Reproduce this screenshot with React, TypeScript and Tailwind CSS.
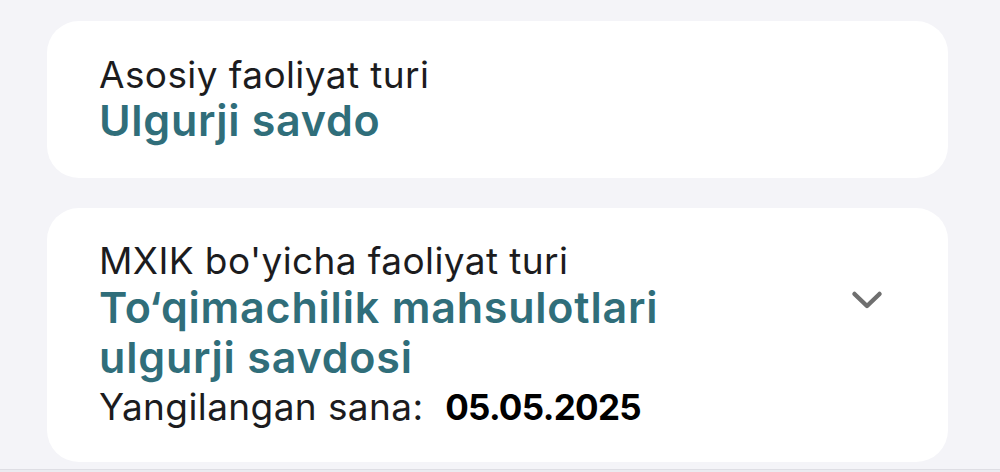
import React from "react";

function Chevron() {
  return (
    <svg width="32" height="22" viewBox="0 0 32 22" fill="none">
      <path d="M3.5 4 L16 16 L28.5 4" stroke="#6f6f6f" strokeWidth="4.5" strokeLinecap="round" strokeLinejoin="round" />
    </svg>
  );
}

export default function App() {
  return (
    <div
      className="w-[1000px] h-[472px] bg-[#f4f4f8] flex flex-col overflow-hidden"
      style={{ fontFamily: "Inter, 'Noto Sans', sans-serif" }}
    >
      <div className="flex flex-col gap-[30px] pl-[47px] pr-[52px] pt-[21px]">
        <div className="h-[157px] rounded-[32px] bg-white pl-[52px] pt-[33px]">
          <div className="text-[37px] leading-[42px] text-[#1c1c1e] tracking-[0.4px]">Asosiy faoliyat turi</div>
          <div className="text-[43px] leading-[48px] font-semibold text-[#306e7a] tracking-[0.7px]">Ulgurji savdo</div>
        </div>
        <div className="h-[254px] rounded-[32px] bg-white flex">
          <div className="flex-1 pl-[52px] pt-[32px]">
            <div className="text-[37px] leading-[42px] text-[#1c1c1e] tracking-[0.4px]">MXIK bo'yicha faoliyat turi</div>
            <div className="max-w-[620px] text-[43px] leading-[50px] font-semibold text-[#306e7a] tracking-[0.8px]">
              To‘qimachilik mahsulotlari ulgurji savdosi
            </div>
            <div className="mt-[4px] text-[37px] leading-[42px] text-[#1c1c1e] tracking-[0.4px] whitespace-pre">
              Yangilangan sana:  <span className="font-bold text-black text-[35px] tracking-[-0.7px]">05.05.2025</span>
            </div>
          </div>
          <div className="pr-[65px] pt-[82px]">
            <Chevron />
          </div>
        </div>
      </div>
      <div className="mt-auto h-[3px] bg-[#ebebf0] border-t border-[#dedee4]" />
    </div>
  );
}
